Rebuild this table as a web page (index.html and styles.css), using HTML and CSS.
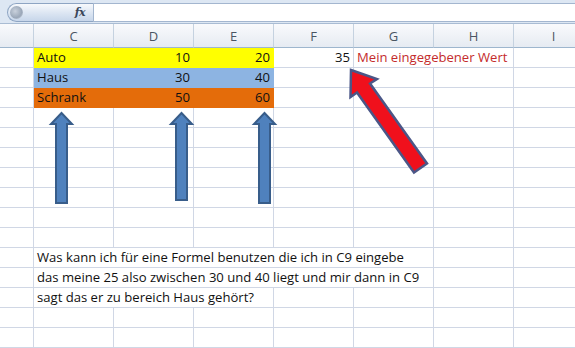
FILE: index.html
```html
<!DOCTYPE html>
<html lang="de">
<head>
<meta charset="utf-8">
<title>Excel</title>
<link rel="stylesheet" href="styles.css">
</head>
<body>
<div class="app">
  <div class="fbar">
    <div class="namebox">
      <span class="knob"></span>
      <span class="fx">fx</span>
    </div>
    <div class="finput"></div>
  </div>
  <div class="sheet">
    <div class="hd"></div><div class="hd">C</div><div class="hd">D</div><div class="hd">E</div><div class="hd">F</div><div class="hd">G</div><div class="hd">H</div><div class="hd">I</div>

    <div class="c"></div><div class="c yellow">Auto</div><div class="c yellow num">10</div><div class="c yellow num">20</div><div class="c num">35</div><div class="c span2 red">Mein eingegebener Wert</div><div class="c"></div>
    <div class="c"></div><div class="c blue">Haus</div><div class="c blue num">30</div><div class="c blue num">40</div><div class="c"></div><div class="c"></div><div class="c"></div><div class="c"></div>
    <div class="c"></div><div class="c orange">Schrank</div><div class="c orange num">50</div><div class="c orange num">60</div><div class="c"></div><div class="c"></div><div class="c"></div><div class="c"></div>

    <div class="c"></div><div class="c"></div><div class="c"></div><div class="c"></div><div class="c"></div><div class="c"></div><div class="c"></div><div class="c"></div>
    <div class="c"></div><div class="c"></div><div class="c"></div><div class="c"></div><div class="c"></div><div class="c"></div><div class="c"></div><div class="c"></div>
    <div class="c"></div><div class="c"></div><div class="c"></div><div class="c"></div><div class="c"></div><div class="c"></div><div class="c"></div><div class="c"></div>
    <div class="c"></div><div class="c"></div><div class="c"></div><div class="c"></div><div class="c"></div><div class="c"></div><div class="c"></div><div class="c"></div>
    <div class="c"></div><div class="c"></div><div class="c"></div><div class="c"></div><div class="c"></div><div class="c"></div><div class="c"></div><div class="c"></div>
    <div class="c"></div><div class="c"></div><div class="c"></div><div class="c"></div><div class="c"></div><div class="c"></div><div class="c"></div><div class="c"></div>
    <div class="c"></div><div class="c"></div><div class="c"></div><div class="c"></div><div class="c"></div><div class="c"></div><div class="c"></div><div class="c"></div>

    <div class="c"></div><div class="c span5">Was kann ich für eine Formel benutzen die ich in C9 eingebe</div><div class="c"></div><div class="c"></div>
    <div class="c"></div><div class="c span5">das meine 25 also zwischen 30 und 40 liegt und mir dann in C9</div><div class="c"></div><div class="c"></div>
    <div class="c"></div><div class="c span3">sagt das er zu bereich Haus gehört?</div><div class="c"></div><div class="c"></div><div class="c"></div><div class="c"></div>

    <div class="c"></div><div class="c"></div><div class="c"></div><div class="c"></div><div class="c"></div><div class="c"></div><div class="c"></div><div class="c"></div>
    <div class="c"></div><div class="c"></div><div class="c"></div><div class="c"></div><div class="c"></div><div class="c"></div><div class="c"></div><div class="c"></div>
  </div>
  <svg class="arrows" width="575" height="348" viewBox="0 0 575 348" xmlns="http://www.w3.org/2000/svg">
    <g fill="#4f81bd" stroke="#385d8a" stroke-width="2" stroke-linejoin="miter">
      <polygon points="61.5,113 72,124 67,124 67,203 56,203 56,124 51,124"/>
      <polygon points="181.5,113 192,124 187,124 187,200 176,200 176,124 171,124"/>
      <polygon points="264.5,113 275,124 270,124 270,203 259,203 259,124 254,124"/>
    </g>
    <polygon fill="#f0101c" stroke="#4b5687" stroke-width="2.5" stroke-linejoin="miter"
      points="351,70 377,79 370,83.5 427,163.5 414,172.5 357,92.5 350.5,97"/>
  </svg>
</div>
</body>
</html>
```

FILE: styles.css
```css
html, body {
  margin: 0;
  padding: 0;
  background: #ffffff;
}

.app {
  position: relative;
  width: 575px;
  height: 348px;
  overflow: hidden;
  font-family: "Open Sans", "Liberation Sans", sans-serif;
}

.fbar {
  height: 24px;
  box-sizing: border-box;
  padding-top: 3px;
  display: flex;
  background: #dde7f3;
  border-bottom: 1px solid #a9bcd3;
}

.namebox {
  position: relative;
  width: 86px;
  height: 19px;
  margin-left: 7px;
  box-sizing: border-box;
  border: 1px solid #8ea5c3;
  border-right: none;
  border-radius: 10px 0 0 10px;
  background: linear-gradient(#f7f9fc, #dbe5f2 55%, #c7d6ea);
  display: flex;
  align-items: center;
  justify-content: flex-end;
}

.knob {
  position: absolute;
  left: 2px;
  top: 2px;
  width: 13px;
  height: 13px;
  border-radius: 50%;
  background: radial-gradient(circle at 40% 40%, #c9d1dc, #9aa7b8 60%, #dfe6ef);
}

.fx {
  font-family: "DejaVu Serif", "Liberation Serif", serif;
  font-style: italic;
  font-weight: bold;
  font-size: 11px;
  color: #3a475a;
  margin-right: 8px;
  letter-spacing: -0.5px;
}

.finput {
  flex: 1;
  height: 19px;
  box-sizing: border-box;
  background: #ffffff;
  border: 1px solid #a3b6cf;
  border-right: none;
}

.sheet {
  display: grid;
  grid-template-columns: 34px repeat(7, 80px);
  grid-template-rows: 24px repeat(15, 20px);
  width: 594px;
}

.hd {
  box-sizing: border-box;
  border-right: 1px solid #c5d2e0;
  border-bottom: 1px solid #9eb6ce;
  background: linear-gradient(#f9fafc, #e6ebf2);
  color: #4a5563;
  font-size: 13px;
  line-height: 23px;
  text-align: center;
  padding-top: 1px;
}

.c {
  box-sizing: border-box;
  border-right: 1px solid #d0d7e5;
  border-bottom: 1px solid #d0d7e5;
  font-size: 13.1px;
  line-height: 19px;
  padding: 0 3px;
  color: #111111;
  white-space: nowrap;
}

.num {
  text-align: right;
}

.red {
  color: #c42b2b;
}

.yellow {
  background: #ffff00;
  border-color: #ffff00;
}

.blue {
  background: #8db4e2;
  border-color: #8db4e2;
}

.orange {
  background: #e46c0a;
  border-color: #e46c0a;
}

.span2 {
  grid-column: span 2;
}

.span3 {
  grid-column: span 3;
}

.span5 {
  grid-column: span 5;
}

.arrows {
  position: absolute;
  left: 0;
  top: 0;
}
```
